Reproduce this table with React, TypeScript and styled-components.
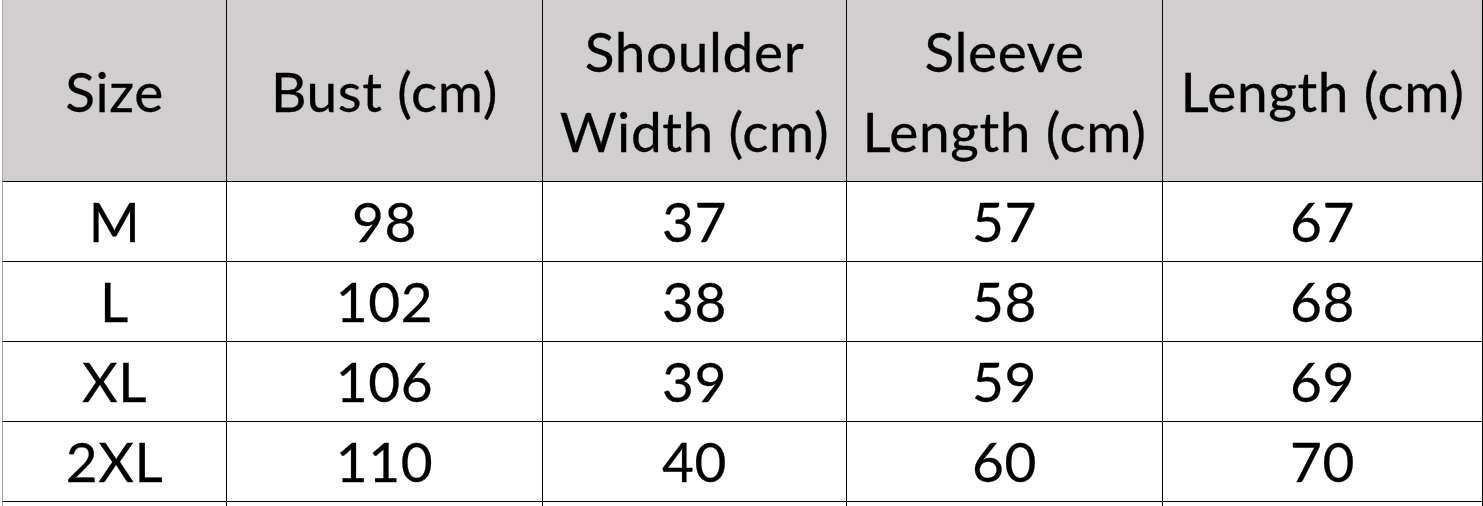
import styled, { createGlobalStyle } from "styled-components";

const GlobalStyle = createGlobalStyle`
  html, body {
    margin: 0;
    padding: 0;
    background: #ffffff;
    overflow: hidden;
  }
  body {
    font-family: Lato, "Noto Sans", "Liberation Sans", sans-serif;
  }
`;

const Sheet = styled.div`
  padding-left: 2px;
  width: 1481px;
`;

const Row = styled.div<{ $height: number }>`
  display: grid;
  grid-template-columns: 225px 316px 304px 316px 320px;
  height: ${(p) => p.$height}px;
`;

const Cell = styled.div<{ $head?: boolean; $first?: boolean }>`
  box-sizing: border-box;
  display: flex;
  align-items: center;
  justify-content: center;
  text-align: center;
  padding: 0 4px;
  background: ${(p) => (p.$head ? "#d0cece" : "#ffffff")};
  border-right: 1px solid #000000;
  border-bottom: 1px solid #000000;
  border-left: ${(p) => (p.$first ? "1px solid #a6a6a6" : "none")};
  color: #000000;
  font-size: 55px;
  letter-spacing: 0.6px;
  -webkit-text-stroke: 0.3px #000000;
  line-height: ${(p) => (p.$head ? "80px" : "1")};
  font-weight: 400;
`;

const headers = [
  "Size",
  "Bust (cm)",
  "Shoulder Width (cm)",
  "Sleeve Length (cm)",
  "Length (cm)",
];

const rows = [
  ["M", "98", "37", "57", "67"],
  ["L", "102", "38", "58", "68"],
  ["XL", "106", "39", "59", "69"],
  ["2XL", "110", "40", "60", "70"],
];

export default function App() {
  return (
    <>
      <GlobalStyle />
      <Sheet>
        <Row $height={182}>
          {headers.map((h, i) => (
            <Cell key={h} $head $first={i === 0}>
              {h}
            </Cell>
          ))}
        </Row>
        {rows.map((r) => (
          <Row key={r[0]} $height={80}>
            {r.map((v, i) => (
              <Cell key={i} $first={i === 0}>
                {v}
              </Cell>
            ))}
          </Row>
        ))}
        <Row $height={80}>
          {[0, 1, 2, 3, 4].map((i) => (
            <Cell key={i} $first={i === 0} />
          ))}
        </Row>
      </Sheet>
    </>
  );
}
